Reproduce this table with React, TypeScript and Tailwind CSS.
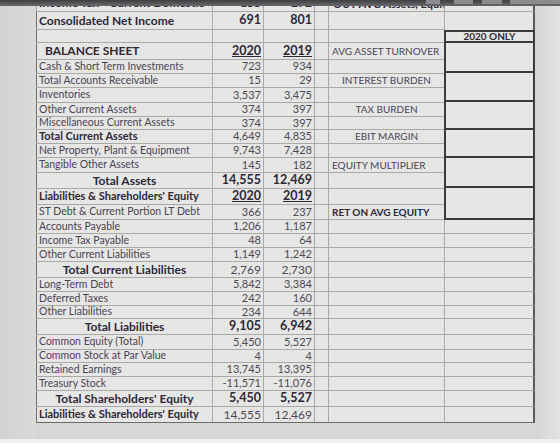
import React from "react"

type Row = {
	h: number
	label?: string
	ls?: "big" | "head" | "b" | "center"
	b?: string
	c?: string
	vs?: "big" | "u" | "lg"
	e?: string
	es?: "l" | "c" | "b"
}

const rows: Row[] = [
	{ h: 18, label: "Consolidated Net Income", ls: "big", b: "691", c: "801", vs: "big" },
	{ h: 13 },
	{ h: 17, label: "BALANCE SHEET", ls: "head", b: "2020", c: "2019", vs: "u", e: "AVG ASSET TURNOVER", es: "l" },
	{ h: 14, label: "Cash & Short Term Investments", b: "723", c: "934" },
	{ h: 14, label: "Total Accounts Receivable", b: "15", c: "29", e: "INTEREST BURDEN", es: "c" },
	{ h: 15, label: "Inventories", b: "3,537", c: "3,475" },
	{ h: 14, label: "Other Current Assets", b: "374", c: "397", e: "TAX BURDEN", es: "c" },
	{ h: 13, label: "Miscellaneous Current Assets", b: "374", c: "397" },
	{ h: 14, label: "Total Current Assets", ls: "b", b: "4,649", c: "4,835", e: "EBIT MARGIN", es: "c" },
	{ h: 14, label: "Net Property, Plant & Equipment", b: "9,743", c: "7,428" },
	{ h: 15, label: "Tangible Other Assets", b: "145", c: "182", e: "EQUITY MULTIPLIER", es: "l" },
	{ h: 16, label: "Total Assets", ls: "center", b: "14,555", c: "12,469", vs: "big" },
	{ h: 16, label: "Liabilities & Shareholders' Equity", ls: "b", b: "2020", c: "2019", vs: "u" },
	{ h: 15, label: "ST Debt & Current Portion LT Debt", b: "366", c: "237", e: "RET ON AVG EQUITY", es: "b" },
	{ h: 14, label: "Accounts Payable", b: "1,206", c: "1,187" },
	{ h: 14, label: "Income Tax Payable", b: "48", c: "64" },
	{ h: 14, label: "Other Current Liabilities", b: "1,149", c: "1,242" },
	{ h: 16, label: "Total Current Liabilities", ls: "center", b: "2,769", c: "2,730", vs: "lg" },
	{ h: 14, label: "Long-Term Debt", b: "5,842", c: "3,384" },
	{ h: 14, label: "Deferred Taxes", b: "242", c: "160" },
	{ h: 13, label: "Other Liabilities", b: "234", c: "644" },
	{ h: 16, label: "Total Liabilities", ls: "center", b: "9,105", c: "6,942", vs: "big" },
	{ h: 15, label: "Common Equity (Total)", b: "5,450", c: "5,527" },
	{ h: 13, label: "Common Stock at Par Value", b: "4", c: "4" },
	{ h: 14, label: "Retained Earnings", b: "13,745", c: "13,395" },
	{ h: 14, label: "Treasury Stock", b: "-11,571", c: "-11,076" },
	{ h: 16, label: "Total Shareholders' Equity", ls: "center", b: "5,450", c: "5,527", vs: "big" },
	{ h: 16, label: "Liabilities & Shareholders' Equity", ls: "b", b: "14,555", c: "12,469", vs: "lg" },
]

const cellBg =
	"bg-[repeating-linear-gradient(90deg,#e7e7e5_0px,#e7e7e5_2px,#dfdfdd_3px)]"

const labelCls = (ls?: Row["ls"]) => {
	switch (ls) {
		case "big":
			return "pl-[2px] text-[12px] font-bold text-[#2f2838]"
		case "head":
			return "pl-[8px] text-[12px] font-bold text-[#2f2838]"
		case "b":
			return "pl-[2px] text-[11px] font-bold text-[#2f2838]"
		case "center":
			return "justify-center text-[12px] font-bold text-[#2f2838]"
		default:
			return "pl-[2px] text-[10.5px] text-[#4a4358]"
	}
}

const valueCls = (vs?: Row["vs"]) => {
	switch (vs) {
		case "big":
			return "text-[12.5px] font-bold text-[#2f2838]"
		case "u":
			return "text-[12.5px] font-bold underline text-[#2f2838]"
		case "lg":
			return "text-[12px] text-[#4d4a55]"
		default:
			return "text-[11px] text-[#4d4a55]"
	}
}

const extraCls = (es?: Row["es"]) => {
	switch (es) {
		case "c":
			return "justify-center text-[10px] text-[#4a4358]"
		case "b":
			return "pl-[3px] text-[10px] font-bold text-[#2f2838]"
		default:
			return "pl-[3px] text-[10px] text-[#4a4358]"
	}
}

const SheetRow = ({ row, last }: { row: Row; last: boolean }) => (
	<div
		className={
			"flex border-b " + (last ? "border-[#6b6b6b]" : "border-[#a9a9a7]")
		}
		style={{ height: row.h }}
	>
		<div
			className={
				"w-[177px] flex items-center whitespace-nowrap border-l border-r border-l-[#6f6f6f] border-r-[#a9a9a7] " +
				labelCls(row.ls)
			}
		>
			{row.label}
		</div>
		<div
			className={
				"w-[51px] flex items-center justify-end pr-[2px] border-r border-[#a9a9a7] " +
				valueCls(row.vs)
			}
		>
			{row.b}
		</div>
		<div
			className={
				"w-[51px] flex items-center justify-end pr-[2px] border-r border-[#a9a9a7] " +
				valueCls(row.vs)
			}
		>
			{row.c}
		</div>
		<div className="w-[14px] border-r border-[#a9a9a7]" />
		<div
			className={
				"w-[115px] flex items-center whitespace-nowrap " + extraCls(row.es)
			}
		>
			{row.e}
		</div>
	</div>
)

const boxHeights = [30, 29, 28, 28, 30, 32]

export default function App() {
	const lower = rows.slice(14)
	return (
		<div
			className="w-[560px] h-[443px] overflow-hidden flex flex-col bg-[#d7d7d5]"
			style={{ fontFamily: "Lato, 'Liberation Sans', sans-serif" }}
		>
			{/* dark bezel strip at top */}
			<div className="h-[6px] flex bg-[linear-gradient(#3f3f41,#6a6a6c)]">
				<div className="flex-1" />
				<div className="w-[14px] h-[4px] mr-[14px] bg-[#8c8c8e]" />
				<div className="w-[19px] h-[4px] mr-[9px] bg-[#8c8c8e]" />
				<div className="w-[20px] h-[4px] mr-[8px] bg-[#8c8c8e]" />
				<div className="w-[50px] h-[4px] bg-[#8c8c8e]" />
			</div>
			<div className="flex flex-1">
				<div className="w-[36px] bg-[linear-gradient(90deg,#d2d2d0,#dadad8)]" />
				<div className="flex flex-col">
					{/* clipped top row */}
					<div className={"h-[6px] flex overflow-hidden border-b border-[#a9a9a7] " + cellBg}>
						<div className="w-[177px] h-[5px] border-x border-[#a9a9a7] overflow-hidden">
							<div className="-mt-[10px] pl-[2px] text-[12px] leading-[14px] font-bold text-[#2f2838] whitespace-nowrap">
								Income Tax - Current Domestic
							</div>
						</div>
						<div className="w-[51px] h-[5px] border-r border-[#a9a9a7] overflow-hidden">
							<div className="-mt-[10px] pr-[2px] text-right text-[12px] leading-[14px] font-bold text-[#2f2838]">155</div>
						</div>
						<div className="w-[51px] h-[5px] border-r border-[#a9a9a7] overflow-hidden">
							<div className="-mt-[10px] pr-[2px] text-right text-[12px] leading-[14px] font-bold text-[#2f2838]">272</div>
						</div>
						<div className="w-[14px] border-r border-[#a9a9a7]" />
						<div className="w-[115px] h-[5px] overflow-hidden">
							<div className="-mt-[9px] pl-[4px] text-[11px] leading-[13px] font-bold text-[#2f2838] whitespace-nowrap">
								OUT AVG Assets, Equity
							</div>
						</div>
					</div>
					<div className={cellBg}>
						{rows.map((r, i) => (
							<SheetRow key={i} row={r} last={i === rows.length - 1} />
						))}
					</div>
				</div>
				{/* 2020 ONLY column */}
				<div className="w-[91px] flex flex-col">
					<div className={"h-[6px] border-l border-r-2 border-b border-[#a9a9a7] border-r-[#5a5a5a] " + cellBg} />
					<div className={"h-[18px] border-l border-r-2 border-[#a9a9a7] border-r-[#5a5a5a] " + cellBg} />
					<div className={"h-[13px] flex items-center justify-center border-2 border-[#3b3b3b] text-[10px] font-bold text-[#2f2838] " + cellBg}>
						2020 ONLY
					</div>
					{boxHeights.map((h, i) => (
						<div
							key={i}
							className={"border-x-2 border-b-2 border-[#3b3b3b] " + cellBg}
							style={{ height: h }}
						/>
					))}
					{lower.map((r, i) => (
						<div
							key={i}
							className={
								"border-l border-r-2 border-b border-l-[#a9a9a7] border-r-[#5a5a5a] " +
								(i === lower.length - 1 ? "border-b-[#6b6b6b] " : "border-b-[#a9a9a7] ") +
								cellBg
							}
							style={{ height: r.h }}
						/>
					))}
				</div>
				<div className="flex-1 bg-[linear-gradient(90deg,#d6d6d4,#e2e2e0)]" />
			</div>
			<div className="h-[4px] bg-[#efefed]" />
		</div>
	)
}
